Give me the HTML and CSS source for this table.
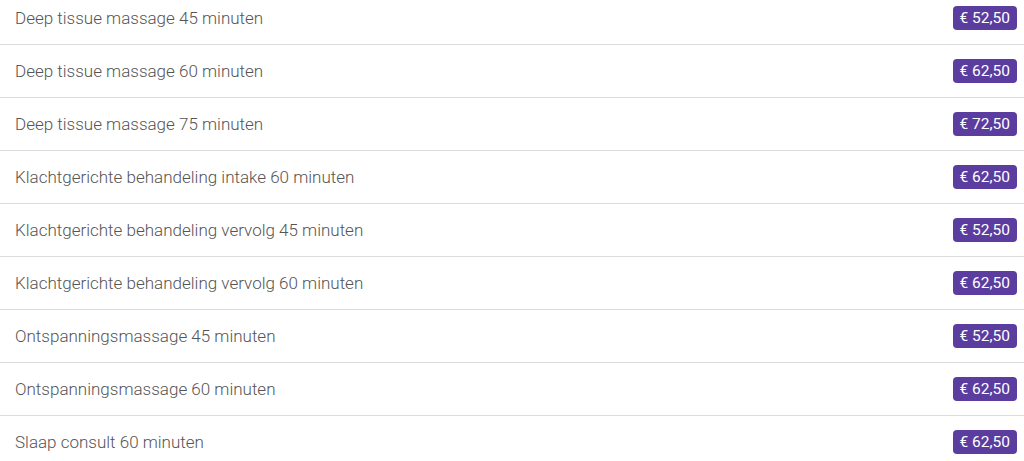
FILE: index.html
```html
<!DOCTYPE html>
<html lang="nl">
<head>
<meta charset="utf-8">
<link rel="stylesheet" href="styles.css">
</head>
<body>
<ul class="prices">
  <li class="row"><span class="name">Deep tissue massage 45 minuten</span><span class="badge">€ 52,50</span></li>
  <li class="row"><span class="name">Deep tissue massage 60 minuten</span><span class="badge">€ 62,50</span></li>
  <li class="row"><span class="name">Deep tissue massage 75 minuten</span><span class="badge">€ 72,50</span></li>
  <li class="row"><span class="name">Klachtgerichte behandeling intake 60 minuten</span><span class="badge">€ 62,50</span></li>
  <li class="row"><span class="name">Klachtgerichte behandeling vervolg 45 minuten</span><span class="badge">€ 52,50</span></li>
  <li class="row"><span class="name">Klachtgerichte behandeling vervolg 60 minuten</span><span class="badge">€ 62,50</span></li>
  <li class="row"><span class="name">Ontspanningsmassage 45 minuten</span><span class="badge">€ 52,50</span></li>
  <li class="row"><span class="name">Ontspanningsmassage 60 minuten</span><span class="badge">€ 62,50</span></li>
  <li class="row"><span class="name">Slaap consult 60 minuten</span><span class="badge">€ 62,50</span></li>
</ul>
</body>
</html>
```

FILE: styles.css
```css
html, body {
  margin: 0;
  padding: 0;
  background: #fff;
  overflow: hidden;
}
body {
  font-family: Roboto, "Liberation Sans", sans-serif;
  font-size: 17px;
  color: #555;
}
.prices {
  list-style: none;
  margin: -8px 0 0 0;
  padding: 0;
}
.row {
  display: flex;
  align-items: center;
  justify-content: space-between;
  padding: 14px 7px 14px 15px;
  border-bottom: 1px solid #dcdcdc;
  line-height: 24px;
}
.name {
  font-weight: 300;
}
.badge {
  background: #5b3c9f;
  color: #fff;
  border-radius: 4px;
  padding: 0 7px;
  height: 24px;
  line-height: 24px;
  font-size: 15.5px;
  font-weight: 400;
}
```
